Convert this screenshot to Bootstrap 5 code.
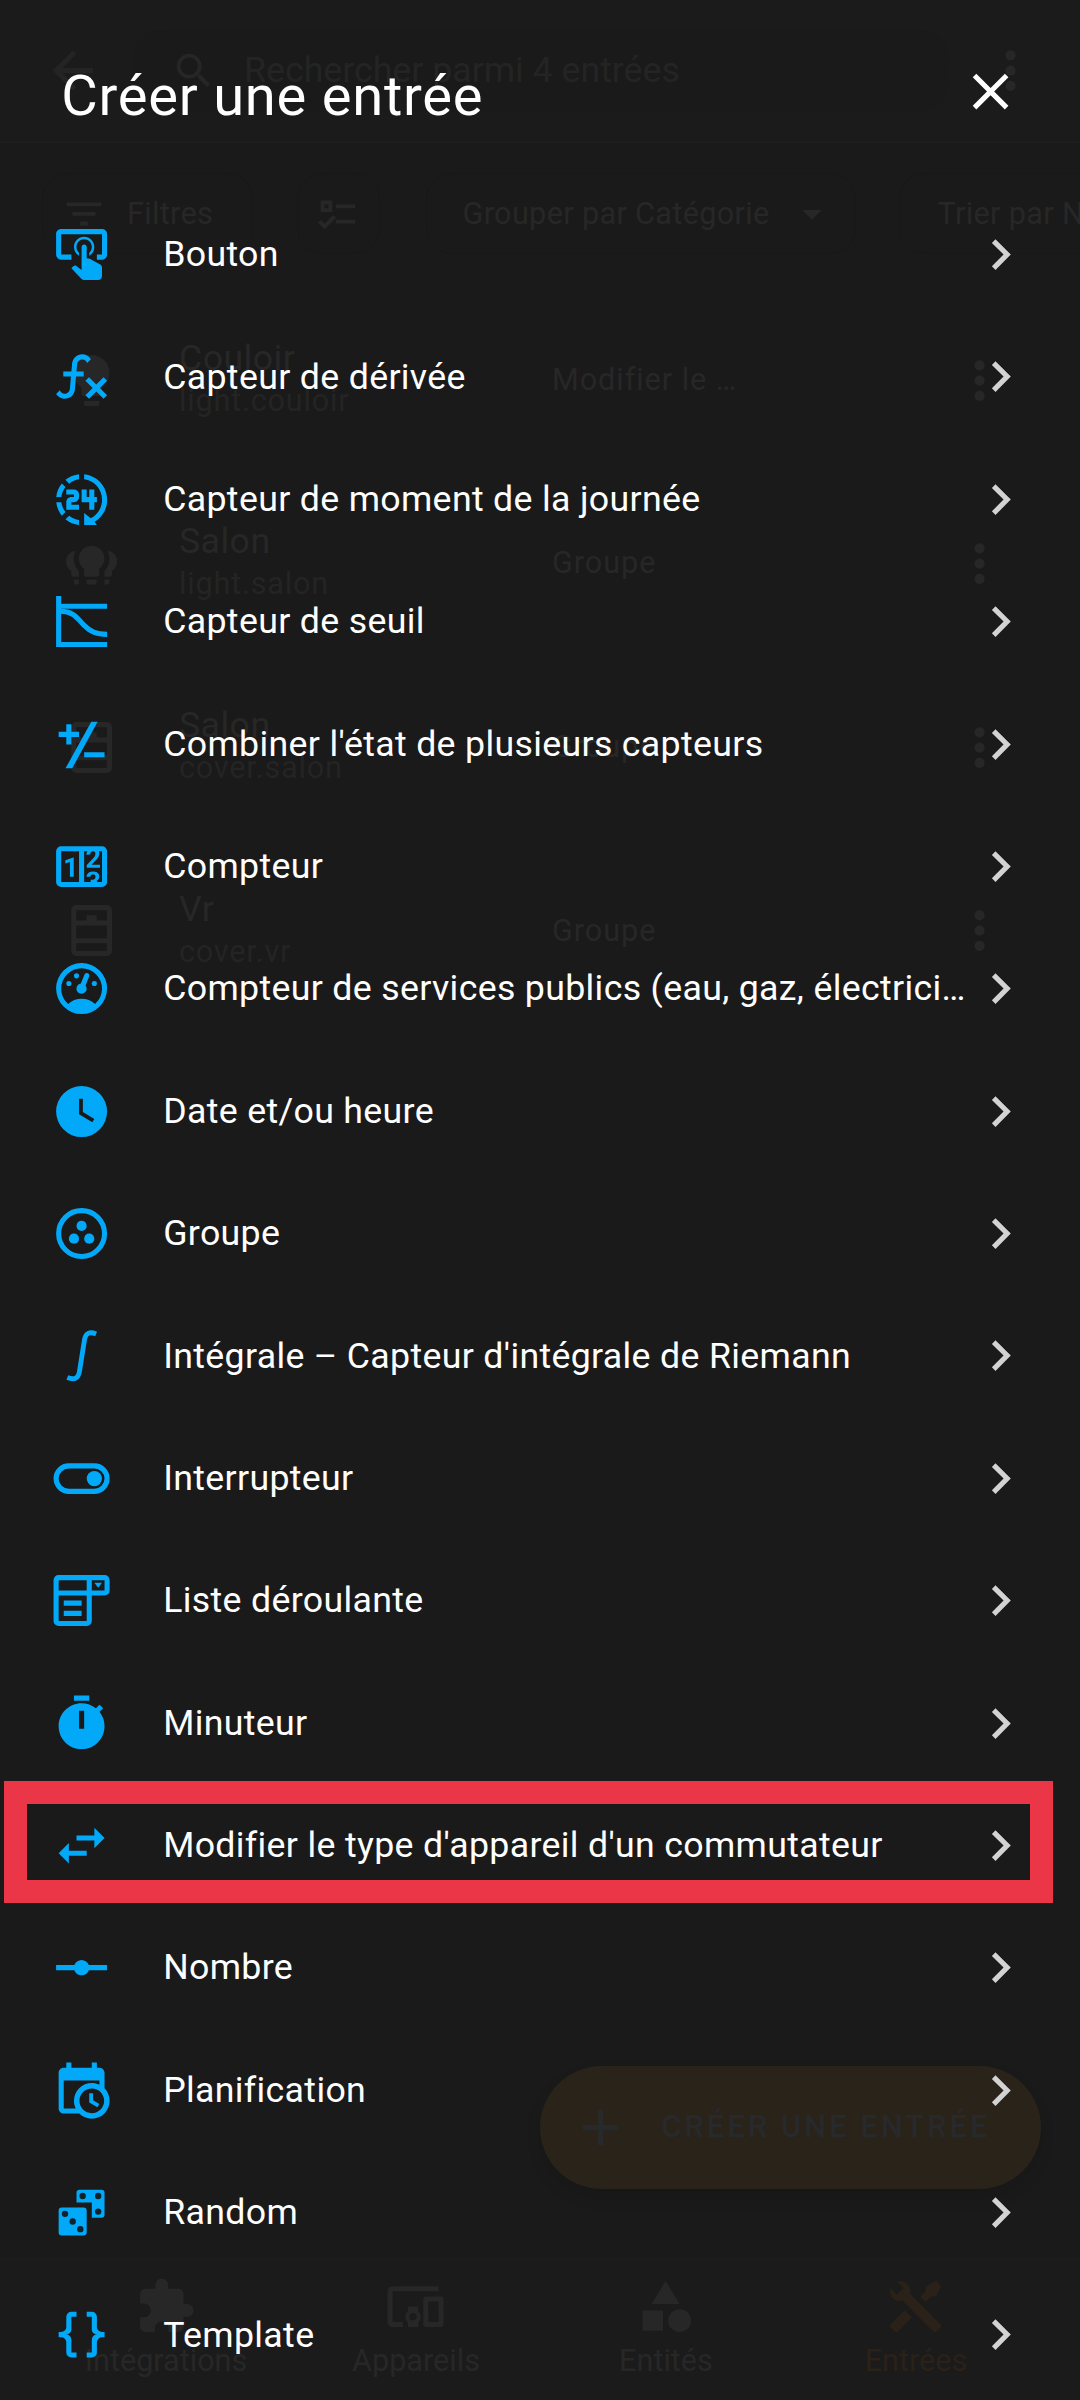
<!DOCTYPE html>
<html lang="fr" data-bs-theme="dark">
<head>
<meta charset="utf-8">
<meta name="viewport" content="width=device-width, initial-scale=1">
<title>Créer une entrée</title>
<link href="https://cdn.jsdelivr.net/npm/bootstrap@5.3.0/dist/css/bootstrap.min.css" rel="stylesheet">
<style>
  :root { --accent: #03a9f9; --page: #1a1a1a; --dim: #272727; --dim2: #242424; --dim-amber: #2a2118; }
  body { background: var(--page); color: #fff; font-family: Roboto, "Liberation Sans", sans-serif; width: 1080px; height: 2400px; overflow: hidden; }
  svg { fill: currentColor; flex: none; display: block; }
  .ic { width: 61.2px; height: 61.2px; }
  .ic-sm { width: 45.9px; height: 45.9px; }

  /* page dimmed behind the dialog */
  .shell { color: var(--dim); height: 2400px; }
  .topbar { height: 142.8px; border-bottom: 1px solid #1e1e1e; background: #1b1b1b; padding: 0 39px 0 41.5px; }
  .search-box { width: 816px; height: 82px; margin-left: 30px; padding-left: 38px; border-radius: 30px; background: #1a1a1a; color: var(--dim2); font-size: 35.7px; gap: 27.5px; }
  .search-box svg { color: #262626; }
  .toolbar { height: 146.2px; padding: 0 0 3px 41.5px; border-bottom: 1px solid #1b1b1b; font-size: 30.6px; letter-spacing: .35px; overflow: hidden; }
  .chip { height: 81px; border: 1px solid #181818; border-radius: 26px; flex: none; white-space: nowrap; }
  .chip-filter { width: 211px; padding-left: 18.5px; gap: 20px; }
  .chip-check { width: 83px; margin-left: 44px; }
  .chip-group { width: 430px; margin-left: 46.5px; padding-left: 35.5px; gap: 19.5px; }
  .chip-sort { width: 430px; margin-left: 43px; padding-left: 37.5px; }
  .entry { height: 183.6px; border-bottom: 1px solid #1b1b1b; padding-left: 61px; }
  .entry-name { width: 373px; margin-left: 56.8px; padding-bottom: 5px; }
  .entry-name div { white-space: nowrap; }
  .t1 { font-size: 35.7px; line-height: 46px; letter-spacing: .45px; }
  .t2 { font-size: 30.6px; line-height: 40px; letter-spacing: .8px; color: var(--dim2); }
  .entry-type { width: 397.3px; font-size: 30.6px; letter-spacing: .95px; padding-bottom: 1px; }
  .fab { height: 122.6px; width: 501px; margin-left: 540px; margin-top: 1042.6px; padding-left: 30.2px; background: #29231a; color: #27292b; box-shadow: 0 8px 16px rgba(0,0,0,.1); font-size: 30.6px; font-weight: 500; letter-spacing: 3.18px; gap: 30px; white-space: nowrap; }
  .tabs { margin-top: 69.4px; height: 141px; border-top: 2px solid #1d1d1d; background: #1b1b1b; padding: 16px 39px 0 41px; font-size: 30.6px; }
  .tab-lbl { line-height: 40px; margin-top: 4px; }
  .tab-on { color: var(--dim-amber); }

  /* dialog */
  .sheet { height: 2400px; }
  .sheet-head { height: 193.5px; padding: 61px 59px 0 61.2px; }
  .sheet-title { font-size: 56.1px; line-height: 70px; letter-spacing: .76px; font-weight: 400; }
  .close-btn { background: none; border: 0; color: #fff; }
  .item { height: 122.39px; padding: 0 48.9px 0 51px; gap: 51px; }
  .item .ic:first-child { color: var(--accent); }
  .item-label { font-size: 35.7px; line-height: 54px; letter-spacing: .335px; padding-bottom: 1px; }
  .chev { color: #d3d3d3; margin-left: -51px; }
  .marked::after { content: ""; position: absolute; left: 3.5px; right: 27.3px; top: -3px; bottom: 3.4px; border: 23px solid #eb3648; }
</style>
</head>
<body class="position-relative">
<svg width="0" height="0" class="position-absolute" aria-hidden="true">
  <symbol id="chev" viewBox="0 0 24 24"><path d="M8.59,16.58L13.17,12L8.59,7.41L10,6L16,12L10,18L8.59,16.58Z"/></symbol>
  <symbol id="dots" viewBox="0 0 24 24"><circle cx="12" cy="6" r="2"/><circle cx="12" cy="12" r="2"/><circle cx="12" cy="18" r="2"/></symbol>
  <symbol id="dresser" viewBox="0 0 24 24"><path fill-rule="evenodd" d="M6,2H18A2,2 0 0,1 20,4V20A2,2 0 0,1 18,22H6A2,2 0 0,1 4,20V4A2,2 0 0,1 6,2M6,4V8H10V6H14V8H18V4H6M6,10V15H18V10H6M6,17V20H18V17H6Z"/></symbol>
</svg>

<div class="shell d-flex flex-column" aria-hidden="true">
  <div class="topbar d-flex align-items-center flex-shrink-0">
    <svg class="ic" viewBox="0 0 24 24" color="#242424"><path d="M20,11V13H8L13.5,18.5L12.08,19.92L4.16,12L12.08,4.08L13.5,5.5L8,11H20Z"/></svg>
    <div class="search-box d-flex align-items-center">
      <svg class="ic-sm" viewBox="0 0 24 24"><path d="M9.5,3A6.5,6.5 0 0,1 16,9.5C16,11.11 15.41,12.59 14.44,13.73L14.71,14H15.5L20.5,19L19,20.5L14,15.5V14.71L13.73,14.44C12.59,15.41 11.11,16 9.5,16A6.5,6.5 0 0,1 3,9.5A6.5,6.5 0 0,1 9.5,3M9.5,5C7,5 5,7 5,9.5C5,12 7,14 9.5,14C12,14 14,12 14,9.5C14,7 12,5 9.5,5Z"/></svg>
      <span>Rechercher parmi 4 entrées</span>
    </div>
    <svg class="ic ms-auto"><use href="#dots"/></svg>
  </div>

  <div class="toolbar d-flex align-items-center flex-shrink-0">
    <div class="chip chip-filter d-flex align-items-center">
      <svg class="ic-sm" viewBox="0 0 24 24"><path d="M6,13H18V11H6M3,6V8H21V6M10,18H14V16H10V18Z"/></svg><span>Filtres</span>
    </div>
    <div class="chip chip-check d-flex align-items-center justify-content-center">
      <svg class="ic-sm" viewBox="0 0 24 24"><path fill-rule="evenodd" d="M3,5H9V11H3V5M5,7V9H7V7H5M11,7H21V9H11V7M11,15H21V17H11V15M5,20L1.5,16.5L2.91,15.09L5,17.17L9.59,12.59L11,14L5,20Z"/></svg>
    </div>
    <div class="chip chip-group d-flex align-items-center">
      <span>Grouper par Catégorie</span><svg class="ic-sm" viewBox="0 0 24 24"><path d="M7,10L12,15L17,10H7Z"/></svg>
    </div>
    <div class="chip chip-sort d-flex align-items-center"><span>Trier par Nom</span></div>
  </div>

  <div class="entry d-flex align-items-center flex-shrink-0">
    <svg class="ic" viewBox="0 0 24 24"><path d="M12,2A7,7 0 0,0 5,9C5,11.38 6.19,13.47 8,14.74V17A1,1 0 0,0 9,18H15A1,1 0 0,0 16,17V14.74C17.81,13.47 19,11.38 19,9A7,7 0 0,0 12,2M9,21A1,1 0 0,0 10,22H14A1,1 0 0,0 15,21V20H9V21Z"/></svg>
    <div class="entry-name"><div class="t1">Couloir</div><div class="t2">light.couloir</div></div>
    <div class="entry-type">Modifier le …</div>
    <svg class="ic"><use href="#dots"/></svg>
  </div>
  <div class="entry d-flex align-items-center flex-shrink-0">
    <svg class="ic" viewBox="0 0 24 24"><path d="M12,5A5,5 0 0 0 7,10c0,1.7 .8,3.2 2,4v2.2a1 1 0 0 0 1,1h4a1 1 0 0 0 1-1V14c1.2-.8 2-2.3 2-4A5 5 0 0 0 12,5M10,18.2v1a1 1 0 0 0 1,1h2a1 1 0 0 0 1-1v-1z"/><g id="side"><path d="M5.8,7C3.5,7.2 2,9 2,11c0,1.7 .7,3.2 2,4v1.2a1 1 0 0 0 1,1h2V15C5.6,13.5 5,12 5,10c0-1 .3-2 .8-3M5,18.2v1a1 1 0 0 0 1,1h1v-2z"/></g><use href="#side" transform="matrix(-1 0 0 1 24 0)"/></svg>
    <div class="entry-name"><div class="t1">Salon</div><div class="t2">light.salon</div></div>
    <div class="entry-type">Groupe</div>
    <svg class="ic"><use href="#dots"/></svg>
  </div>
  <div class="entry d-flex align-items-center flex-shrink-0">
    <svg class="ic"><use href="#dresser"/></svg>
    <div class="entry-name"><div class="t1">Salon</div><div class="t2">cover.salon</div></div>
    <div class="entry-type">Groupe</div>
    <svg class="ic"><use href="#dots"/></svg>
  </div>
  <div class="entry d-flex align-items-center flex-shrink-0">
    <svg class="ic"><use href="#dresser"/></svg>
    <div class="entry-name"><div class="t1">Vr</div><div class="t2">cover.vr</div></div>
    <div class="entry-type">Groupe</div>
    <svg class="ic"><use href="#dots"/></svg>
  </div>

  <div class="fab rounded-pill d-flex align-items-center flex-shrink-0">
    <svg class="ic" viewBox="0 0 24 24"><path d="M19,13H13V19H11V13H5V11H11V5H13V11H19V13Z"/></svg><span>CRÉER UNE ENTRÉE</span>
  </div>

  <div class="tabs d-flex flex-shrink-0">
    <div class="flex-fill w-25 d-flex flex-column align-items-center">
      <svg class="ic" viewBox="0 0 24 24"><path d="M20.5,11H19V7C19,5.89 18.1,5 17,5H13V3.5A2.5,2.5 0 0,0 10.5,1A2.5,2.5 0 0,0 8,3.5V5H4A2,2 0 0,0 2,7V10.8H3.5C5,10.8 6.2,12 6.2,13.5C6.2,15 5,16.2 3.5,16.2H2V20A2,2 0 0,0 4,22H7.8V20.5C7.8,19 9,17.8 10.5,17.8C12,17.8 13.2,19 13.2,20.5V22H17A2,2 0 0,0 19,20V16H20.5A2.5,2.5 0 0,0 23,13.5A2.5,2.5 0 0,0 20.5,11Z"/></svg>
      <span class="tab-lbl">Intégrations</span>
    </div>
    <div class="flex-fill w-25 d-flex flex-column align-items-center">
      <svg class="ic" viewBox="0 0 24 24"><path fill-rule="evenodd" d="M3 6H21V4H3C1.9 4 1 4.9 1 6V18C1 19.1 1.9 20 3 20H7V18H3V6M13 12H9V13.78C8.39 14.33 8 15.11 8 16C8 16.89 8.39 17.67 9 18.22V20H13V18.22C13.61 17.67 14 16.88 14 16S13.61 14.33 13 13.78V12M11 17.5C10.17 17.5 9.5 16.83 9.5 16S10.17 14.5 11 14.5 12.5 15.17 12.5 16 11.83 17.5 11 17.5M22 8H16C15.5 8 15 8.5 15 9V19C15 19.5 15.5 20 16 20H22C22.5 20 23 19.5 23 19V9C23 8.5 22.5 8 22 8M21 18H17V10H21V18Z"/></svg>
      <span class="tab-lbl">Appareils</span>
    </div>
    <div class="flex-fill w-25 d-flex flex-column align-items-center">
      <svg class="ic" viewBox="0 0 24 24"><path d="M11,13.5V21.5H3V13.5H11M12,2L17.5,11H6.5L12,2M17.5,13C20,13 22,15 22,17.5C22,20 20,22 17.5,22C15,22 13,20 13,17.5C13,15 15,13 17.5,13Z"/></svg>
      <span class="tab-lbl">Entités</span>
    </div>
    <div class="tab-on flex-fill w-25 d-flex flex-column align-items-center">
      <svg class="ic" viewBox="0 0 24 24"><path d="M21.71 20.29L20.29 21.71A1 1 0 0 1 18.88 21.71L7 9.85A3.81 3.81 0 0 1 6 10A4 4 0 0 1 2.22 4.7L4.76 7.24L5.29 6.71L6.71 5.29L7.24 4.76L4.7 2.22A4 4 0 0 1 10 6A3.81 3.81 0 0 1 9.85 7L21.71 18.88A1 1 0 0 1 21.71 20.29M2.29 18.88A1 1 0 0 0 2.29 20.29L3.71 21.71A1 1 0 0 0 5.12 21.71L10.59 16.25L7.76 13.42M20 2L16 4V6L13.83 8.17L15.83 10.17L18 8H20L22 4Z"/></svg>
      <span class="tab-lbl">Entrées</span>
    </div>
  </div>
</div>

<div class="sheet position-absolute top-0 start-0 w-100" role="dialog" aria-labelledby="dlg">
  <div class="sheet-head d-flex justify-content-between align-items-start">
    <h1 class="sheet-title m-0" id="dlg">Créer une entrée</h1>
    <button class="close-btn p-0" type="button" aria-label="Fermer"><svg class="ic" viewBox="0 0 24 24"><path d="M19,6.41L17.59,5L12,10.59L6.41,5L5,6.41L10.59,12L5,17.59L6.41,19L12,13.41L17.59,19L19,17.59L13.41,12L19,6.41Z"/></svg></button>
  </div>
  <div class="d-flex flex-column">
    <div class="item d-flex align-items-center">
      <svg class="ic" viewBox="0 0 24 24"><path d="M13 5C15.21 5 17 6.79 17 9C17 10.5 16.2 11.77 15 12.46V11.24C15.61 10.69 16 9.89 16 9C16 7.34 14.66 6 13 6S10 7.34 10 9C10 9.89 10.39 10.69 11 11.24V12.46C9.8 11.77 9 10.5 9 9C9 6.79 10.79 5 13 5M20 20.5C19.97 21.32 19.32 21.97 18.5 22H13C12.62 22 12.26 21.85 12 21.57L8 17.37L8.74 16.6C8.93 16.39 9.2 16.28 9.5 16.28H9.7L12 18V9C12 8.45 12.45 8 13 8S14 8.45 14 9V13.47L15.21 13.6L19.15 15.79C19.68 16.03 20 16.56 20 17.14V20.5M20 2H4C2.9 2 2 2.9 2 4V12C2 13.11 2.9 14 4 14H8V12L4 12L4 4H20L20 12H18V14H20V13.97L20.04 14C21.13 14 22 13.09 22 12V4C22 2.9 21.11 2 20 2Z"/></svg>
      <div class="item-label flex-fill text-truncate">Bouton</div><svg class="ic chev"><use href="#chev"/></svg>
    </div>
    <div class="item d-flex align-items-center">
      <svg class="ic" viewBox="0 0 24 24"><path d="M12.42,5.29C11.32,5.19 10.35,6 10.25,7.11L10,10H12.82V12H9.82L9.38,17.07C9.18,19.27 7.24,20.9 5.04,20.7C3.79,20.59 2.66,19.9 2,18.83L3.5,17.33C3.83,18.38 4.96,18.97 6,18.63C6.78,18.39 7.33,17.7 7.4,16.89L7.82,12H4.82V10H8L8.27,6.93C8.46,4.73 10.39,3.1 12.6,3.28C13.86,3.39 15,4.09 15.66,5.17L14.16,6.67C13.91,5.9 13.23,5.36 12.42,5.29M22,13.65L20.59,12.24L17.76,15.07L14.93,12.24L13.5,13.65L16.35,16.5L13.5,19.31L14.93,20.72L17.76,17.89L20.59,20.72L22,19.31L19.17,16.5L22,13.65Z"/></svg>
      <div class="item-label flex-fill text-truncate">Capteur de dérivée</div><svg class="ic chev"><use href="#chev"/></svg>
    </div>
    <div class="item d-flex align-items-center">
      <svg class="ic" viewBox="0 0 24 24"><path d="M13,2.03V4.05C17.39,4.59 20.5,8.58 19.96,12.97C19.6,16 17.9,18.2 15.6,19.3L13,17.3V22H18L17.1,20.7C20.4,18.8 22.4,15 21.95,11C21.5,6.25 17.73,2.5 13,2.03M11,2.06C9.05,2.25 7.19,3 5.67,4.26L7.1,5.74C8.22,4.84 9.57,4.26 11,4.06V2.06M4.26,5.67C3,7.19 2.25,9.04 2.05,11H4.05C4.24,9.58 4.8,8.23 5.69,7.1L4.26,5.67M2.06,13C2.26,14.96 3.03,16.81 4.27,18.33L5.69,16.9C4.81,15.77 4.24,14.42 4.06,13H2.06M7.1,18.37L5.67,19.74C7.18,21 9.04,21.79 11,22V20C9.58,19.82 8.23,19.25 7.1,18.37M6,8V10H9V11H8C6.9,11 6,11.9 6,13V16H11V14H8V13H9C10.1,13 11,12.1 11,11V10C11,8.9 10.1,8 9,8H6M12,8V13H15V16H17V13H18V11H17V8H15V11H14V8H12Z"/></svg>
      <div class="item-label flex-fill text-truncate">Capteur de moment de la journée</div><svg class="ic chev"><use href="#chev"/></svg>
    </div>
    <div class="item d-flex align-items-center">
      <svg class="ic" viewBox="0 0 24 24"><path d="M2,2H4V5H22V7H4V20H22V22H2Z"/><path d="M3,8C9,7.6 10.6,11.2 13,13.5C15.4,15.9 17.5,17 22,17" fill="none" stroke="currentColor" stroke-width="2"/></svg>
      <div class="item-label flex-fill text-truncate">Capteur de seuil</div><svg class="ic chev"><use href="#chev"/></svg>
    </div>
    <div class="item d-flex align-items-center">
      <svg class="ic" viewBox="0 0 24 24"><path d="M6,4H8V7H11V9H8V12H6V9H3V7H6ZM15.8,3H18.3L8.3,21.3H5.7ZM13,15H21V17H13Z"/></svg>
      <div class="item-label flex-fill text-truncate">Combiner l'état de plusieurs capteurs</div><svg class="ic chev"><use href="#chev"/></svg>
    </div>
    <div class="item d-flex align-items-center">
      <svg class="ic" viewBox="0 0 24 24"><path fill-rule="evenodd" d="M4,4H20A2,2 0 0,1 22,6V18A2,2 0 0,1 20,20H4A2,2 0 0,1 2,18V6A2,2 0 0,1 4,4M4,6V18H11V6H4M20,18V6H18.76C19,6.54 18.95,7.07 18.95,7.13C18.88,7.8 18.41,8.5 18.24,8.75L15.91,11.3L19.23,11.28L19.24,12.5L14.04,12.47L14,11.47C14,11.47 17.05,8.24 17.2,7.95C17.34,7.67 17.91,6 16.5,6C15.27,6.05 15.41,7.3 15.41,7.3L13.87,7.31C13.87,7.31 13.88,6.65 14.25,6H13V18H15.58L15.57,17.14L16.54,17.13C16.54,17.13 17.45,16.97 17.46,16.08C17.5,15.08 16.65,15.08 16.5,15.08C16.37,15.08 15.43,15.13 15.43,15.95H13.91C13.91,15.95 13.95,13.89 16.5,13.89C19.1,13.89 18.96,15.91 18.96,15.91C18.96,15.91 19,17.16 17.85,17.63L18.37,18H20M8.92,16H7.42V10.2L5.62,10.76V9.53L8.76,8.41H8.92V16Z"/></svg>
      <div class="item-label flex-fill text-truncate">Compteur</div><svg class="ic chev"><use href="#chev"/></svg>
    </div>
    <div class="item d-flex align-items-center">
      <svg class="ic" viewBox="0 0 24 24"><path fill-rule="evenodd" d="M12,2A10,10 0 0,0 2,12A10,10 0 0,0 12,22A10,10 0 0,0 22,12A10,10 0 0,0 12,2M12,4A8,8 0 0,1 20,12C20,14.4 19,16.5 17.3,18C15.9,16.7 14,16 12,16C10,16 8.2,16.7 6.7,18C5,16.5 4,14.4 4,12A8,8 0 0,1 12,4Z"/><path d="M14,5.89C13.62,5.9 13.26,6.15 13.1,6.54L11.81,9.77L11.71,10C11,10.13 10.41,10.6 10.14,11.26C9.73,12.29 10.23,13.45 11.26,13.86C12.29,14.27 13.45,13.77 13.86,12.74C14.12,12.08 14,11.32 13.57,10.76L13.67,10.5L14.96,7.29L14.97,7.26C15.17,6.75 14.92,6.17 14.41,5.96C14.28,5.91 14.15,5.89 14,5.89Z"/><circle cx="10" cy="7" r="1"/><circle cx="7" cy="10" r="1"/><circle cx="17" cy="10" r="1"/></svg>
      <div class="item-label flex-fill text-truncate">Compteur de services publics (eau, gaz, électricité, ...)</div><svg class="ic chev"><use href="#chev"/></svg>
    </div>
    <div class="item d-flex align-items-center">
      <svg class="ic" viewBox="0 0 24 24"><path fill-rule="evenodd" d="M12,2A10,10 0 0,0 2,12A10,10 0 0,0 12,22A10,10 0 0,0 22,12A10,10 0 0,0 12,2M16.2,16.2L11,13V7H12.5V12.2L17,14.9L16.2,16.2Z"/></svg>
      <div class="item-label flex-fill text-truncate">Date et/ou heure</div><svg class="ic chev"><use href="#chev"/></svg>
    </div>
    <div class="item d-flex align-items-center">
      <svg class="ic" viewBox="0 0 24 24"><circle cx="12" cy="12" r="9" fill="none" stroke="currentColor" stroke-width="2"/><circle cx="12" cy="9" r="2"/><circle cx="9" cy="14" r="2"/><circle cx="15" cy="14" r="2"/></svg>
      <div class="item-label flex-fill text-truncate">Groupe</div><svg class="ic chev"><use href="#chev"/></svg>
    </div>
    <div class="item d-flex align-items-center">
      <svg class="ic" viewBox="0 0 24 24"><path d="M17.7,3.5C15.2,2.5 13.5,3.1 13.1,6L11.2,18C10.8,20.9 9.2,21.7 6.4,20.6" fill="none" stroke="currentColor" stroke-width="1.9"/></svg>
      <div class="item-label flex-fill text-truncate">Intégrale – Capteur d'intégrale de Riemann</div><svg class="ic chev"><use href="#chev"/></svg>
    </div>
    <div class="item d-flex align-items-center">
      <svg class="ic" viewBox="0 0 24 24"><rect x="2" y="7" width="20" height="10" rx="5" fill="none" stroke="currentColor" stroke-width="2"/><circle cx="17" cy="12" r="3"/></svg>
      <div class="item-label flex-fill text-truncate">Interrupteur</div><svg class="ic chev"><use href="#chev"/></svg>
    </div>
    <div class="item d-flex align-items-center">
      <svg class="ic" viewBox="0 0 24 24"><path fill-rule="evenodd" d="M17,5H20L18.5,7L17,5M3,2H21A2,2 0 0,1 23,4V8A2,2 0 0,1 21,10H16V20A2,2 0 0,1 14,22H3A2,2 0 0,1 1,20V4A2,2 0 0,1 3,2M3,4V8H14V4H3M21,8V4H16V8H21M3,20H14V10H3V20M5,12H12V14H5V12M5,16H12V18H5V16Z"/></svg>
      <div class="item-label flex-fill text-truncate">Liste déroulante</div><svg class="ic chev"><use href="#chev"/></svg>
    </div>
    <div class="item d-flex align-items-center">
      <svg class="ic" viewBox="0 0 24 24"><path fill-rule="evenodd" d="M19.03 7.39L20.45 5.97C20 5.46 19.55 5 19.04 4.56L17.62 6C16.07 4.74 14.12 4 12 4C7.03 4 3 8.03 3 13S7.03 22 12 22C17 22 21 17.97 21 13C21 10.88 20.26 8.93 19.03 7.39M13 14H11V7H13V14M15 1H9V3H15V1Z"/></svg>
      <div class="item-label flex-fill text-truncate">Minuteur</div><svg class="ic chev"><use href="#chev"/></svg>
    </div>
    <div class="item marked position-relative d-flex align-items-center">
      <svg class="ic" viewBox="0 0 24 24"><path d="M21,9L17,5V8H10V10H17V13M7,11L3,15L7,19V16H14V14H7V11Z"/></svg>
      <div class="item-label flex-fill text-truncate">Modifier le type d'appareil d'un commutateur</div><svg class="ic chev"><use href="#chev"/></svg>
    </div>
    <div class="item d-flex align-items-center">
      <svg class="ic" viewBox="0 0 24 24"><path d="M2,11H9.17C9.58,9.83 10.69,9 12,9C13.31,9 14.42,9.83 14.83,11H22V13H14.83C14.42,14.17 13.31,15 12,15C10.69,15 9.58,14.17 9.17,13H2V11Z"/></svg>
      <div class="item-label flex-fill text-truncate">Nombre</div><svg class="ic chev"><use href="#chev"/></svg>
    </div>
    <div class="item d-flex align-items-center">
      <svg class="ic" viewBox="0 0 24 24"><path fill-rule="evenodd" d="M15,13H16.5V15.82L18.94,17.23L18.19,18.53L15,16.69V13M19,8H5V19H9.67C9.24,18.09 9,17.07 9,16A7,7 0 0,1 16,9C17.07,9 18.09,9.24 19,9.67V8M5,21C3.89,21 3,20.1 3,19V5C3,3.89 3.89,3 5,3H6V1H8V3H16V1H18V3H19A2,2 0 0,1 21,5V11.1C22.24,12.36 23,14.09 23,16A7,7 0 0,1 16,23C14.09,23 12.36,22.24 11.1,21H5M16,11.15A4.85,4.85 0 0,0 11.15,16C11.15,18.68 13.32,20.85 16,20.85A4.85,4.85 0 0,0 20.85,16C20.85,13.32 18.68,11.15 16,11.15Z"/></svg>
      <div class="item-label flex-fill text-truncate">Planification</div><svg class="ic chev"><use href="#chev"/></svg>
    </div>
    <div class="item d-flex align-items-center">
      <svg class="ic" viewBox="0 0 24 24"><path d="M11.2,3H19.8A1.2,1.2 0 0 1 21,4.2V12.8A1.2,1.2 0 0 1 19.8,14H16V8H10V4.2A1.2,1.2 0 0 1 11.2,3M4.2,10H12.8A1.2,1.2 0 0 1 14,11.2V19.8A1.2,1.2 0 0 1 12.8,21H4.2A1.2,1.2 0 0 1 3,19.8V11.2A1.2,1.2 0 0 1 4.2,10"/><g fill="#12222b"><circle cx="12.4" cy="5.5" r="1.25"/><circle cx="18.5" cy="5.5" r="1.25"/><circle cx="18.5" cy="11.6" r="1.25"/><circle cx="5.5" cy="12.5" r="1.25"/><circle cx="8.5" cy="15.5" r="1.25"/><circle cx="11.5" cy="18.5" r="1.25"/></g></svg>
      <div class="item-label flex-fill text-truncate">Random</div><svg class="ic chev"><use href="#chev"/></svg>
    </div>
    <div class="item d-flex align-items-center">
      <svg class="ic" viewBox="0 0 24 24"><path d="M8,3A2,2 0 0,0 6,5V9A2,2 0 0,1 4,11H3V13H4A2,2 0 0,1 6,15V19A2,2 0 0,0 8,21H10V19H8V14A2,2 0 0,0 6,12A2,2 0 0,0 8,10V5H10V3M16,3A2,2 0 0,1 18,5V9A2,2 0 0,0 20,11H21V13H20A2,2 0 0,0 18,15V19A2,2 0 0,1 16,21H14V19H16V14A2,2 0 0,1 18,12A2,2 0 0,1 16,10V5H14V3H16Z"/></svg>
      <div class="item-label flex-fill text-truncate">Template</div><svg class="ic chev"><use href="#chev"/></svg>
    </div>
  </div>
</div>
<script src="https://cdn.jsdelivr.net/npm/bootstrap@5.3.0/dist/js/bootstrap.bundle.min.js"></script>
</body>
</html>
